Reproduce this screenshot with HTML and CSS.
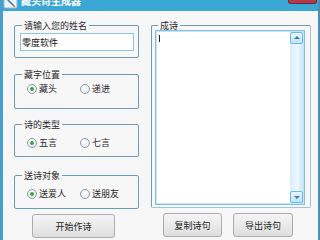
FILE: index.html
```html
<!DOCTYPE html>
<html lang="zh-CN">
<head>
    <meta charset="UTF-8">
    <title>藏头诗生成器</title>
    <link rel="stylesheet" href="styles.css">
</head>
<body>
    <div class="window">
        <div class="titlebar">
            <svg class="app-icon" width="16" height="9" viewBox="0 0 16 9">
                <rect x="1" y="-3" width="13" height="11" rx="1" fill="#eef6fb" stroke="#8fb6cf"/>
                <path d="M4 -1 L11 6" stroke="#2f79b8" stroke-width="1.5"/>
                <path d="M10 5 L12 7" stroke="#c08a3a" stroke-width="1.5"/>
            </svg>
            <span class="title">藏头诗生成器</span>
            <div class="close-btn"></div>
        </div>

        <div class="client">
            <div class="left-col">
                <fieldset class="group name-group">
                    <legend>请输入您的姓名</legend>
                    <input type="text" class="name-input" value="零度软件">
                </fieldset>

                <fieldset class="group radio-group pos-group">
                    <legend>藏字位置</legend>
                    <div class="radio-row">
                        <label class="radio checked"><span class="dot"></span>藏头</label>
                        <label class="radio"><span class="dot"></span>递进</label>
                    </div>
                </fieldset>

                <fieldset class="group radio-group type-group">
                    <legend>诗的类型</legend>
                    <div class="radio-row">
                        <label class="radio checked"><span class="dot"></span>五言</label>
                        <label class="radio"><span class="dot"></span>七言</label>
                    </div>
                </fieldset>

                <fieldset class="group radio-group target-group">
                    <legend>送诗对象</legend>
                    <div class="radio-row">
                        <label class="radio checked"><span class="dot"></span>送爱人</label>
                        <label class="radio"><span class="dot"></span>送朋友</label>
                    </div>
                </fieldset>

                <button class="btn start-btn">开始作诗</button>
            </div>

            <div class="right-col">
                <fieldset class="group poem-group">
                    <legend>成诗</legend>
                    <div class="poem-box">
                        <textarea class="poem-text"></textarea>
                        <div class="vscroll">
                            <div class="arrow up"></div>
                            <div class="track"></div>
                            <div class="arrow down"></div>
                        </div>
                    </div>
                </fieldset>
                <div class="btn-row">
                    <button class="btn copy-btn">复制诗句</button>
                    <button class="btn export-btn">导出诗句</button>
                </div>
            </div>
        </div>
    </div>
</body>
</html>
```

FILE: styles.css
```css
body {
    margin: 0;
    font-family: "Noto Sans CJK SC", "Noto Sans", sans-serif;
    font-size: 9px;
    color: #2a2a2a;
    background: #f7f7f7;
}
.window {
    width: 320px;
    height: 240px;
    box-sizing: border-box;
    border-left: 3px solid #4a9ecb;
    border-right: 2px solid #4a8fb8;
    background: #f7f7f7;
    overflow: hidden;
}
.titlebar {
    position: relative;
    height: 11px;
    background: #3aa8d4;
    display: flex;
    align-items: flex-start;
    overflow: hidden;
}
.title {
    margin-left: 2px;
    margin-top: -5px;
    line-height: 12px;
    font-size: 10px;
    font-weight: bold;
    color: #ffffff;
}
.close-btn {
    position: absolute;
    top: 0;
    right: 1px;
    width: 27px;
    height: 3px;
    background: #b03b4d;
    border: 1px solid #7a2634;
    border-top: none;
    border-radius: 0 0 3px 3px;
}
.client {
    display: flex;
    padding: 9px 0 0 11px;
}
.left-col {
    width: 125px;
    display: flex;
    flex-direction: column;
}
.right-col {
    width: 160px;
    margin-left: 12px;
}
.group {
    margin: 0;
    padding: 0 5px;
    border: 1px solid #6f9ab6;
    border-radius: 2px;
    min-width: 0;
}
.group legend {
    padding: 0 2px;
    margin-left: 2px;
    line-height: 11px;
}
.name-group { padding-bottom: 6px; }
.name-input {
    display: block;
    box-sizing: border-box;
    width: 114px;
    height: 18px;
    margin: 2px 0 0;
    padding: 0 1px;
    border: 1px solid #8ec6e8;
    background: #fff;
    font-family: inherit;
    font-size: 9px;
    color: #111;
    outline: none;
}
.pos-group {
    margin-top: 11px;
    padding-top: 2px;
    padding-bottom: 13px;
}
.type-group {
    margin-top: 10px;
    padding-top: 6px;
    padding-bottom: 7px;
}
.target-group {
    margin-top: 13px;
    padding-top: 6px;
    padding-bottom: 8px;
}
.radio-row {
    display: flex;
    padding-left: 7px;
    height: 13px;
    align-items: center;
}
.radio {
    width: 54px;
    display: flex;
    align-items: center;
}
.dot {
    box-sizing: border-box;
    width: 10px;
    height: 10px;
    margin-right: 2px;
    border: 1px solid #8e9aa6;
    border-radius: 50%;
    background: radial-gradient(circle at 40% 35%, #ffffff 0, #e6eef5 70%, #d3dde6 100%);
    position: relative;
}
.radio.checked .dot::after {
    content: "";
    position: absolute;
    left: 2px;
    top: 2px;
    width: 4px;
    height: 4px;
    border-radius: 50%;
    background: #3fa33f;
}
.btn {
    box-sizing: border-box;
    height: 24px;
    border: 1px solid #acacac;
    border-radius: 3px;
    background: linear-gradient(#f4f4f4, #ebebeb 50%, #dddddd);
    font-family: inherit;
    font-size: 9px;
    color: #1e1e1e;
    padding: 0;
}
.start-btn {
    width: 83px;
    margin: 5px 0 0 18px;
}
.poem-group {
    height: 188px;
    box-sizing: border-box;
    padding: 0 5px 4px 3px;
    border-color: #6f9ab6 #a6c3d4 #a6c3d4 #6f9ab6;
}
.poem-group legend { margin-left: 3px; }
.poem-box {
    position: relative;
    display: flex;
    height: 173px;
    margin-top: -1px;
    border: 1px solid #80bfe5;
    box-shadow: inset 0 0 0 1px #c9e4f5;
    background: #fff;
}
.poem-box::before {
    content: "";
    position: absolute;
    left: 3px;
    top: 4px;
    width: 1px;
    height: 7px;
    background: #222;
}
.poem-text {
    flex: 1;
    border: none;
    margin: 2px 0 2px 2px;
    resize: none;
    outline: none;
    background: transparent;
}
.vscroll {
    width: 13px;
    margin: 1px 1px 1px 0;
    display: flex;
    flex-direction: column;
    background: linear-gradient(to right, #d8eefc, #eef8ff 60%, #c7e5f8);
}
.track { flex: 1; }
.arrow {
    position: relative;
    box-sizing: border-box;
    height: 12px;
    border: 1px solid #69b8e6;
    border-radius: 2px;
    background: linear-gradient(#e8f6ff, #bfe3fa);
}
.arrow::after {
    content: "";
    position: absolute;
    left: 3px;
    border-left: 3px solid transparent;
    border-right: 3px solid transparent;
}
.arrow.up::after {
    top: 3px;
    border-bottom: 3px solid #3c79a8;
}
.arrow.down::after {
    top: 4px;
    border-top: 3px solid #3c79a8;
}
.btn-row {
    display: flex;
    margin-top: 5px;
    padding-left: 12px;
}
.copy-btn { width: 59px; }
.export-btn { width: 60px; margin-left: 11px; }
```
